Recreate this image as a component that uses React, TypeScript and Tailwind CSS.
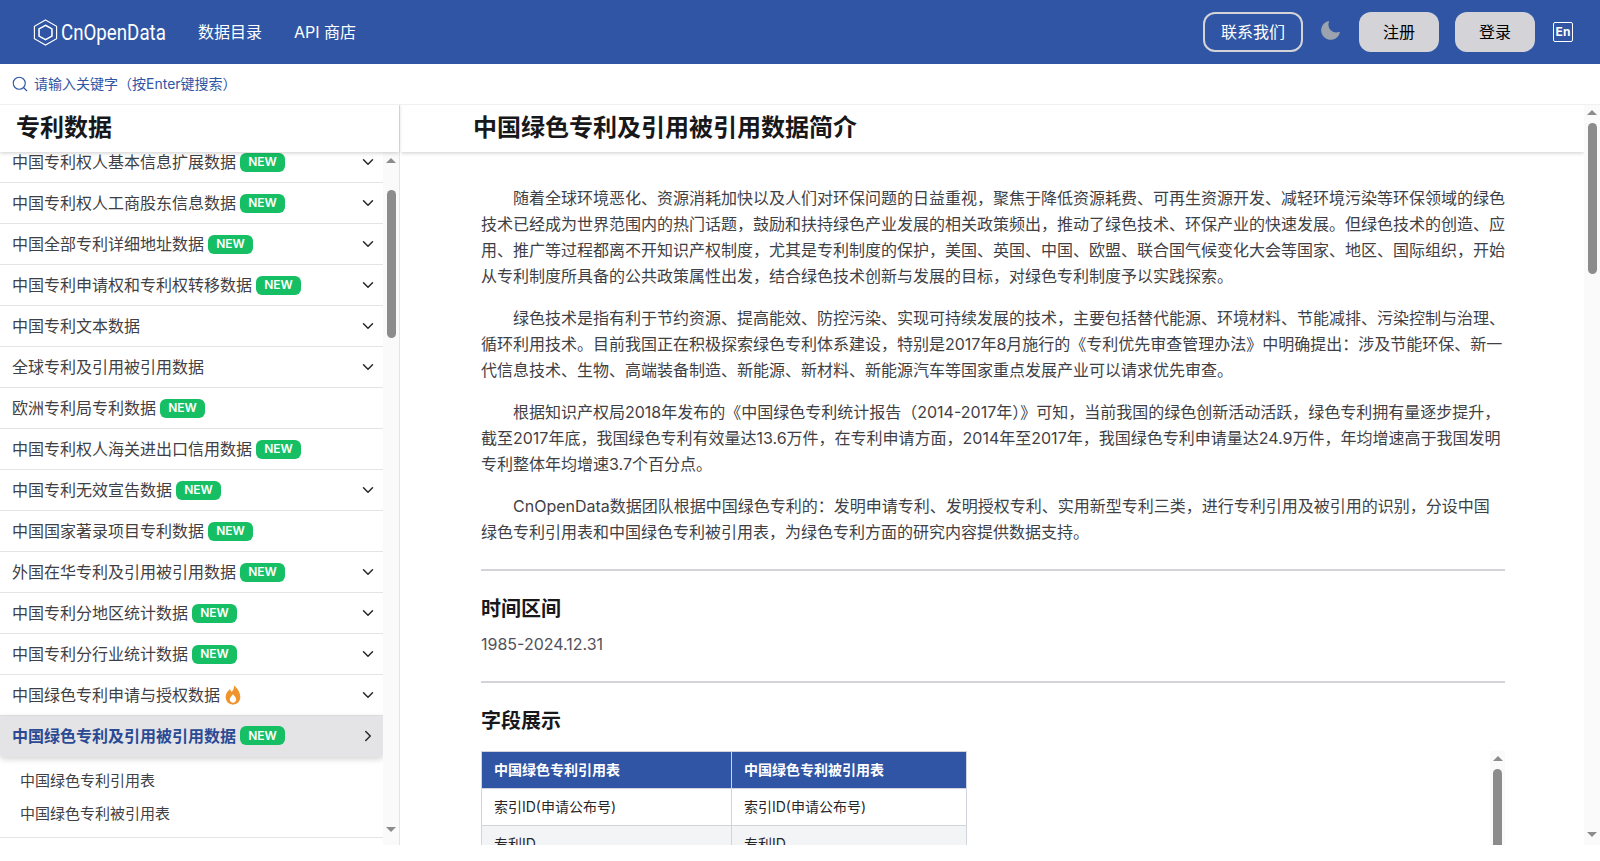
import { ChevronDown, ChevronRight, Search } from "lucide-react"

const sidebarItems = [
  { name: "中国专利权人基本信息扩展数据", tag: "new", arrow: true },
  { name: "中国专利权人工商股东信息数据", tag: "new", arrow: true },
  { name: "中国全部专利详细地址数据", tag: "new", arrow: true },
  { name: "中国专利申请权和专利权转移数据", tag: "new", arrow: true },
  { name: "中国专利文本数据", arrow: true },
  { name: "全球专利及引用被引用数据", arrow: true },
  { name: "欧洲专利局专利数据", tag: "new" },
  { name: "中国专利权人海关进出口信用数据", tag: "new" },
  { name: "中国专利无效宣告数据", tag: "new", arrow: true },
  { name: "中国国家著录项目专利数据", tag: "new" },
  { name: "外国在华专利及引用被引用数据", tag: "new", arrow: true },
  { name: "中国专利分地区统计数据", tag: "new", arrow: true },
  { name: "中国专利分行业统计数据", tag: "new", arrow: true },
  { name: "中国绿色专利申请与授权数据", tag: "hot", arrow: true },
]

const fontFamily = "font-['Inter','Noto_Sans_CJK_SC',sans-serif]"

function NewBadge() {
  return (
    <span className="ml-1 inline-flex h-[19px] w-[45px] items-center justify-center rounded-md bg-[#16bf63] text-xs font-semibold text-white">
      NEW
    </span>
  )
}

function FlameIcon() {
  return (
    <svg viewBox="0 0 24 24" className="ml-[2px] h-[22px] w-[22px] fill-[#f0932b]">
      <path fillRule="evenodd" d="M13 1.500c.6 3.200-.7 5-2.300 7C9.400 7.700 8.900 6.700 8.800 5.500 6 7.800 4 10.800 4 14.300 4 19 7.500 22.500 12 22.500s8-3.500 8-8.200c0-5.400-3.300-10.200-7-12.800zM12 20.400c-2 0-3.500-1.500-3.500-3.500 0-2.100 1.600-3.500 3.500-5.800 1.900 2.300 3.500 3.700 3.500 5.800 0 2-1.500 3.500-3.500 3.500z" />
    </svg>
  )
}

function ScrollTrack({ thumbTop, thumbHeight, bottom }: { thumbTop: string; thumbHeight: string; bottom: string }) {
  return (
    <div className="flex w-4 shrink-0 flex-col items-center justify-between bg-[#fafafa]">
      <div className="flex w-full flex-col items-center">
        <div className="mt-[6px] h-0 w-0 border-x-[5px] border-b-[5px] border-x-transparent border-b-[#8c8c8c]" />
        <div className={`w-[9px] rounded-full bg-[#8c8c8c] ${thumbTop} ${thumbHeight}`} />
      </div>
      <div className={`h-0 w-0 border-x-[5px] border-t-[5px] border-x-transparent border-t-[#8c8c8c] ${bottom}`} />
    </div>
  )
}

function SidebarRow({ item, first }: { item: (typeof sidebarItems)[number]; first: boolean }) {
  return (
    <div
      className={`flex shrink-0 items-center justify-between border-b border-[#e4e4e7] pl-3 pr-[6px] text-base text-[#3f3f46] ${
        first ? "h-[31px] pb-[10px]" : "h-[41px]"
      }`}
    >
      <div className="flex h-5 items-center whitespace-nowrap">
        {item.name}
        {item.tag === "new" && <NewBadge />}
        {item.tag === "hot" && <FlameIcon />}
      </div>
      {item.arrow && <ChevronDown className="h-[18px] w-[18px] text-[#27272a]" strokeWidth={2} />}
    </div>
  )
}

function Paragraph({ children }: { children: string }) {
  return <p className="mb-4 indent-8 text-base leading-[26px] text-[#3f3f46]">{children}</p>
}

export default function App() {
  return (
    <div className={`flex h-screen flex-col overflow-hidden bg-white pb-4 ${fontFamily}`}>
      <header className="flex h-16 shrink-0 items-center justify-between bg-[#2f55a4] pl-8 pr-[27px] text-white">
        <div className="flex items-center">
          <div className="flex w-[134px] items-center">
            <svg viewBox="0 0 28 28" className="h-[27px] w-[27px] shrink-0 fill-none stroke-white" strokeWidth="1.2">
              <path d="M14 1 25.500 7.500v13L14 27 2.500 20.500v-13z" />
              <path d="M14 6.500 20.700 10.300v7.400L14 21.500 7.300 17.700v-7.400z" strokeWidth="1.600" />
            </svg>
            <span className="ml-[2px] origin-left scale-x-[0.85] font-['Roboto',sans-serif] text-[22px] font-normal">CnOpenData</span>
          </div>
          <nav className="ml-8 flex items-center gap-8 text-base">
            <a href="#">数据目录</a>
            <a href="#">API 商店</a>
          </nav>
        </div>
        <div className="flex items-center">
          <button className="h-10 w-[100px] rounded-xl border-2 border-[#d4d4d8] text-base">联系我们</button>
          <svg viewBox="0 0 24 24" className="ml-[17px] -mt-[4px] h-[22px] w-[22px] fill-[#9ca3af]">
            <path d="M9.500 2.500a.8.8 0 0 1 .2.900A8.600 8.600 0 0 0 20.600 14.300a.8.800 0 0 1 1 1.100A10.400 10.400 0 1 1 8.600 2.400a.8.800 0 0 1 .900.100z" />
          </svg>
          <button className="ml-[17px] h-10 w-20 rounded-xl bg-[#d4d4d8] text-base text-black">注册</button>
          <button className="ml-4 h-10 w-20 rounded-xl bg-[#d4d4d8] text-base text-black">登录</button>
          <span className="ml-[18px] flex h-5 w-5 items-center justify-center rounded-[2px] border-[1.5px] border-white text-[12px] font-bold">En</span>
        </div>
      </header>

      <div className="z-20 flex h-10 shrink-0 items-center gap-[5px] bg-white pl-[11px] text-sm text-[#2f55a4] shadow-[0_1px_0_#f0f0f0]">
        <Search className="h-[18px] w-[18px]" strokeWidth={1.5} />
        <span>请输入关键字（按Enter键搜索）</span>
      </div>

      <div className="flex min-h-0 flex-1">
        <aside className="flex w-[400px] shrink-0 flex-col border-r border-[#e4e4e7]">
          <h2 className="z-10 flex h-12 shrink-0 items-center pl-4 text-2xl font-bold text-[#18181b] shadow-[0_1px_4px_rgba(0,0,0,0.2)]">
            专利数据
          </h2>
          <div className="flex min-h-0 flex-1">
            <div className="flex min-w-0 flex-1 flex-col overflow-hidden">
              {sidebarItems.map((item, i) => (
                <SidebarRow key={item.name} item={item} first={i === 0} />
              ))}
              <div className="flex h-[41px] shrink-0 items-center justify-between rounded-b-sm bg-[#e4e4e7] pb-[2px] pl-3 pr-[6px] text-base font-semibold text-[#2a4a94] shadow-[0_2px_6px_rgba(0,0,0,0.18)]">
                <div className="flex items-center whitespace-nowrap">
                  中国绿色专利及引用被引用数据
                  <NewBadge />
                </div>
                <ChevronRight className="h-[18px] w-[18px] text-[#27272a]" strokeWidth={2} />
              </div>
              <div className="flex h-[81px] shrink-0 flex-col justify-center gap-[9px] border-b border-[#e4e4e7] pl-5 text-[15px] leading-[24px] text-[#3f3f46]">
                <div>中国绿色专利引用表</div>
                <div>中国绿色专利被引用表</div>
              </div>
            </div>
            <ScrollTrack thumbTop="mt-[27px]" thumbHeight="h-[148px]" bottom="mb-[13px]" />
          </div>
        </aside>

        <main className="ml-px flex min-w-0 flex-1">
          <div className="flex min-w-0 flex-1 flex-col overflow-hidden">
            <h1 className="z-10 flex h-12 shrink-0 items-center pl-[72px] text-2xl font-semibold text-[#18181b] shadow-[0_1px_4px_rgba(0,0,0,0.2)]">
              中国绿色专利及引用被引用数据简介
            </h1>
            <article className="ml-20 w-[1024px] pt-[33px]">
              <Paragraph>随着全球环境恶化、资源消耗加快以及人们对环保问题的日益重视，聚焦于降低资源耗费、可再生资源开发、减轻环境污染等环保领域的绿色技术已经成为世界范围内的热门话题，鼓励和扶持绿色产业发展的相关政策频出，推动了绿色技术、环保产业的快速发展。但绿色技术的创造、应用、推广等过程都离不开知识产权制度，尤其是专利制度的保护，美国、英国、中国、欧盟、联合国气候变化大会等国家、地区、国际组织，开始从专利制度所具备的公共政策属性出发，结合绿色技术创新与发展的目标，对绿色专利制度予以实践探索。</Paragraph>
              <Paragraph>绿色技术是指有利于节约资源、提高能效、防控污染、实现可持续发展的技术，主要包括替代能源、环境材料、节能减排、污染控制与治理、循环利用技术。目前我国正在积极探索绿色专利体系建设，特别是2017年8月施行的《专利优先审查管理办法》中明确提出：涉及节能环保、新一代信息技术、生物、高端装备制造、新能源、新材料、新能源汽车等国家重点发展产业可以请求优先审查。</Paragraph>
              <Paragraph>根据知识产权局2018年发布的《中国绿色专利统计报告（2014-2017年）》可知，当前我国的绿色创新活动活跃，绿色专利拥有量逐步提升，截至2017年底，我国绿色专利有效量达13.6万件，在专利申请方面，2014年至2017年，我国绿色专利申请量达24.9万件，年均增速高于我国发明专利整体年均增速3.7个百分点。</Paragraph>
              <Paragraph>CnOpenData数据团队根据中国绿色专利的：发明申请专利、发明授权专利、实用新型专利三类，进行专利引用及被引用的识别，分设中国绿色专利引用表和中国绿色专利被引用表，为绿色专利方面的研究内容提供数据支持。</Paragraph>
              <hr className="mt-[24px] border-t-2 border-[#d4d4d8]" />
              <h3 className="mt-[24px] text-xl font-semibold leading-7 text-[#18181b]">时间区间</h3>
              <p className="mt-[9px] text-base leading-6 text-[#52525b]">1985-2024.12.31</p>
              <hr className="mt-[25px] border-t-2 border-[#d4d4d8]" />
              <h3 className="mt-[24px] text-xl font-semibold leading-7 text-[#18181b]">字段展示</h3>
              <div className="mt-[16px] flex items-start justify-between">
                <table className="w-[486px] table-fixed border-collapse text-sm leading-[20px] text-[#27272a]">
                  <thead>
                    <tr className="h-[37px] bg-[#2f55a4] text-left text-white">
                      <th className="w-[250px] border border-[#d1d5db] px-3 font-semibold">中国绿色专利引用表</th>
                      <th className="border border-[#d1d5db] px-3 font-semibold">中国绿色专利被引用表</th>
                    </tr>
                  </thead>
                  <tbody>
                    <tr className="h-[37px]">
                      <td className="border border-[#d1d5db] px-3">索引ID(申请公布号)</td>
                      <td className="border border-[#d1d5db] px-3">索引ID(申请公布号)</td>
                    </tr>
                    <tr className="h-[37px] bg-[#f3f4f6]">
                      <td className="border border-[#d1d5db] px-3">专利ID</td>
                      <td className="border border-[#d1d5db] px-3">专利ID</td>
                    </tr>
                  </tbody>
                </table>
                <div className="flex w-[15px] flex-col items-center bg-[#fafafa]">
                  <div className="mt-[5px] h-0 w-0 border-x-[5px] border-b-[5px] border-x-transparent border-b-[#8c8c8c]" />
                  <div className="mt-[8px] h-[120px] w-[9px] rounded-t-full bg-[#8c8c8c]" />
                </div>
              </div>
            </article>
          </div>
          <ScrollTrack thumbTop="mt-[8px]" thumbHeight="h-[151px]" bottom="mb-[8px]" />
        </main>
      </div>
    </div>
  )
}
